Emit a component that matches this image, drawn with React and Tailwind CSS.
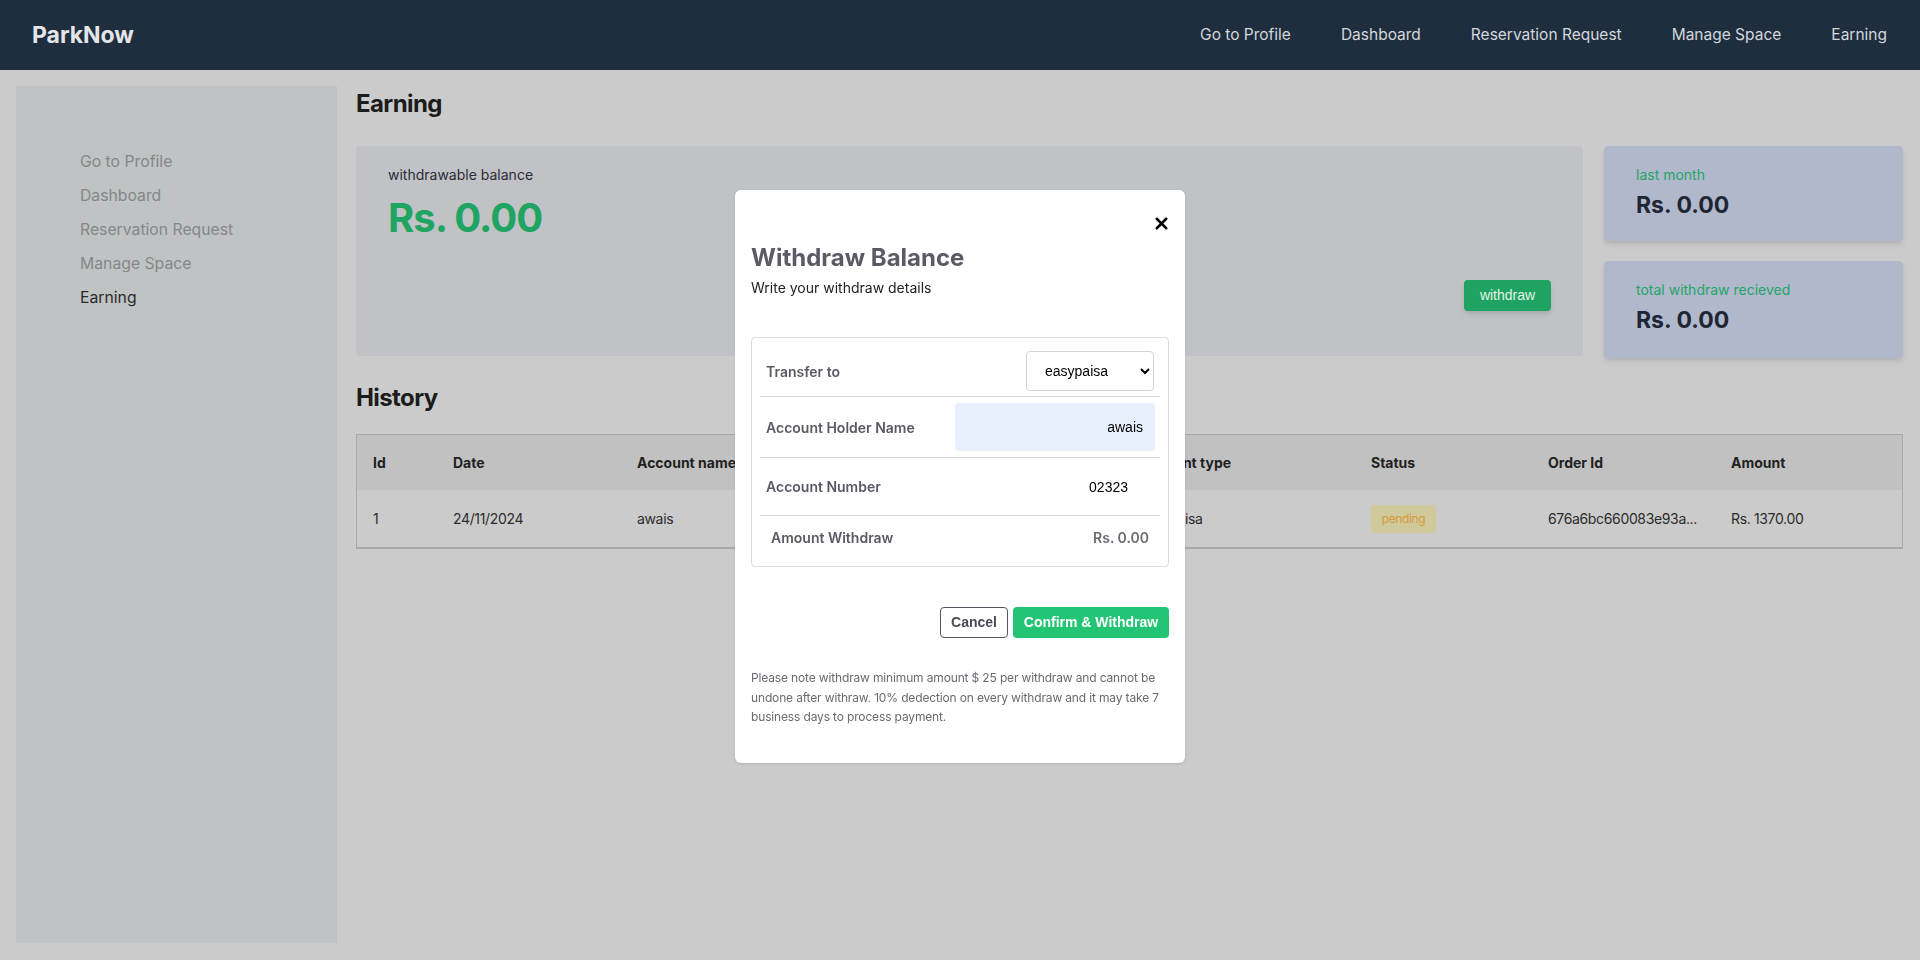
import React from 'react';
import { X } from 'lucide-react';

const navLinks = ['Go to Profile', 'Dashboard', 'Reservation Request', 'Manage Space', 'Earning'];

const columns = ['Id', 'Date', 'Account name', 'Account number', 'Account type', 'Status', 'Order Id', 'Amount'];

const history = [
  {
    id: 1,
    date: '24/11/2024',
    name: 'awais',
    number: '02323',
    type: 'easypaisa',
    status: 'pending',
    orderId: '676a6bc660083e93a...',
    amount: 'Rs. 1370.00',
  },
];

function WithdrawModal() {
  return (
    <div className="fixed inset-0 z-20 flex justify-center pt-[190px]">
      <div className="w-[450px] h-[573px] bg-white rounded-md px-4 pt-[24px] shadow-sm">
        {/* close button */}
        <div className="flex justify-end -mr-[2px]">
          <button className="text-black">
            <X size={19} strokeWidth={3.2} />
          </button>
        </div>
        <h2 className="mt-[9px] text-[24px] leading-8 font-bold text-[#5b5b66]">Withdraw Balance</h2>
        <p className="mt-[4px] text-[14px] leading-5 text-[#222]">Write your withdraw details</p>

        {/* details box */}
        <div className="mt-[39px] border border-[#dcdcdc] rounded p-2">
          <div className="flex items-center justify-between border-b border-[#d9d9d9] pl-1.5 pr-[6px] py-[5px]">
            <span className="text-[14px] font-semibold text-[#5a5a64]">Transfer to</span>
            <select
              defaultValue="easypaisa"
              className="w-[128px] h-[40px] border border-[#d5d5d5] rounded pl-[14px] pr-2 text-[14px] text-black font-['Liberation_Sans',Arial,sans-serif] bg-white"
            >
              <option value="easypaisa">easypaisa</option>
              <option value="jazzcash">jazzcash</option>
            </select>
          </div>
          <div className="flex items-center justify-between border-b border-[#d9d9d9] pl-1.5 pr-[5px] py-[6px]">
            <span className="text-[14px] font-semibold text-[#5a5a64]">Account Holder Name</span>
            <input
              readOnly
              value="awais"
              className="w-[200px] h-[48px] bg-[#e8f0fe] rounded text-right pr-3 text-[14px] text-black font-['Liberation_Sans',Arial,sans-serif] outline-none"
            />
          </div>
          <div className="flex items-center justify-between border-b border-[#d9d9d9] pl-1.5 pr-[5px] h-[58px]">
            <span className="text-[14px] font-semibold text-[#5a5a64]">Account Number</span>
            <input
              readOnly
              value="02323"
              className="w-[200px] h-[40px] text-right pr-[27px] text-[14px] text-black font-['Liberation_Sans',Arial,sans-serif] outline-none"
            />
          </div>
          <div className="flex items-center justify-between pl-[11px] pr-[11px] h-[42px]">
            <span className="text-[14px] font-semibold text-[#5a5a64]">Amount Withdraw</span>
            <span className="text-[14px] font-semibold text-[#6a6a74]">Rs. 0.00</span>
          </div>
        </div>

        {/* actions */}
        <div className="mt-[40px] flex justify-end gap-[5px]">
          <button className="h-[31px] w-[68px] border border-[#55555f] rounded text-[14px] font-bold text-[#4a4a55] font-['Liberation_Sans',Arial,sans-serif]">
            Cancel
          </button>
          <button className="h-[31px] w-[156px] bg-[#23c474] rounded text-[14px] font-bold text-white font-['Liberation_Sans',Arial,sans-serif]">
            Confirm &amp; Withdraw
          </button>
        </div>

        <p className="mt-[30px] w-[418px] text-[12px] leading-[19.5px] tracking-[-0.15px] text-[#6a6a72]">
          Please note withdraw minimum amount $ 25 per withdraw and cannot be undone after withraw. 10% dedection on every withdraw and it may take 7 business days to process payment.
        </p>
      </div>
    </div>
  );
}

export default function App() {
  return (
    <div className="min-h-screen h-[960px] bg-[#cbcbcb] font-['Inter','Noto_Sans',sans-serif] flex flex-col overflow-hidden">
      {/* Top navbar */}
      <nav className="h-[70px] shrink-0 bg-[#1f2e3e] flex items-center justify-between pl-8 pr-[33px]">
        <span className="text-[23px] font-bold text-[#e3e5e8]">ParkNow</span>
        <div className="flex items-center gap-[50px]">
          {navLinks.map((link) => (
            <a key={link} className="text-[15.5px] text-[#d4d7dc]">
              {link}
            </a>
          ))}
        </div>
      </nav>

      <div className="flex-1 flex gap-[19px] pl-4 pr-[17px] pt-4 pb-[17px]">
        {/* Sidebar */}
        <aside className="w-[321px] shrink-0 bg-[#bfc3c4] pl-16 pt-[64px] flex flex-col gap-[10px]">
          {navLinks.map((link) => (
            <span
              key={link}
              className={
                link === 'Earning'
                  ? 'text-[15.75px] leading-6 text-[#2b2b2b]'
                  : 'text-[15.75px] leading-6 text-[#858789]'
              }
            >
              {link}
            </span>
          ))}
        </aside>

        {/* Main */}
        <main className="flex-1 min-w-0">
          <h1 className="text-[24px] leading-8 font-bold text-[#1c1c1c] mt-[2px] tracking-tight">Earning</h1>

          <div className="mt-[26px] flex gap-[21px]">
            <div className="flex-1 h-[210px] bg-[#c0c2c6] rounded flex flex-col pl-8 pr-8 pt-[19px] pb-[45px]">
              <p className="text-[14px] leading-5 text-[#2a2c36]">withdrawable balance</p>
              <p className="mt-[9px] text-[40px] leading-[48px] font-bold text-[#20a462] tracking-tight">Rs. 0.00</p>
              <div className="mt-auto flex justify-end">
                <button className="h-[31px] w-[87px] bg-[#1ea362] rounded text-[14px] text-[#e6f2ea] shadow-md font-['Liberation_Sans',Arial,sans-serif]">
                  withdraw
                </button>
              </div>
            </div>

            <div className="w-[299px] flex flex-col gap-[20px]">
              <div className="h-[95px] bg-[#b1b8cc] rounded shadow-md pl-8 pt-[19px]">
                <p className="text-[14px] leading-5 text-[#23a566]">last month</p>
                <p className="mt-[4px] text-[23px] leading-8 font-bold text-[#1f2633]">Rs. 0.00</p>
              </div>
              <div className="h-[97px] bg-[#b1b8cc] rounded shadow-md pl-8 pt-[19px]">
                <p className="text-[14px] leading-5 text-[#23a566]">total withdraw recieved</p>
                <p className="mt-[4px] text-[23px] leading-8 font-bold text-[#1f2633]">Rs. 0.00</p>
              </div>
            </div>
          </div>

          <h2 className="mt-[24px] text-[24px] leading-8 font-bold text-[#1c1c1c] tracking-tight">History</h2>

          <div className="mt-[20px] border border-[#a9a9a9] border-b-2">
            <div className="grid grid-cols-[80px_184px_244px_258px_232px_177px_183px_1fr] h-[55px] items-center bg-[#c1c1c1]">
              {columns.map((col) => (
                <span key={col} className="pl-4 text-[14px] font-bold text-[#1f1f1f]">
                  {col}
                </span>
              ))}
            </div>
            {history.map((row) => (
              <div
                key={row.id}
                className="grid grid-cols-[80px_184px_244px_258px_232px_177px_183px_1fr] h-[57px] items-center text-[14px] text-[#2b2b2b] tracking-tight"
              >
                <span className="pl-4">{row.id}</span>
                <span className="pl-4">{row.date}</span>
                <span className="pl-4">{row.name}</span>
                <span className="pl-4">{row.number}</span>
                <span className="pl-4">{row.type}</span>
                <span className="pl-4">
                  <span className="inline-flex items-center justify-center w-[65px] h-[28px] rounded bg-[#cfc99b] text-[12px] text-[#d59a3c]">
                    {row.status}
                  </span>
                </span>
                <span className="pl-4">{row.orderId}</span>
                <span className="pl-4">{row.amount}</span>
              </div>
            ))}
          </div>
        </main>
      </div>

      <WithdrawModal />
    </div>
  );
}
